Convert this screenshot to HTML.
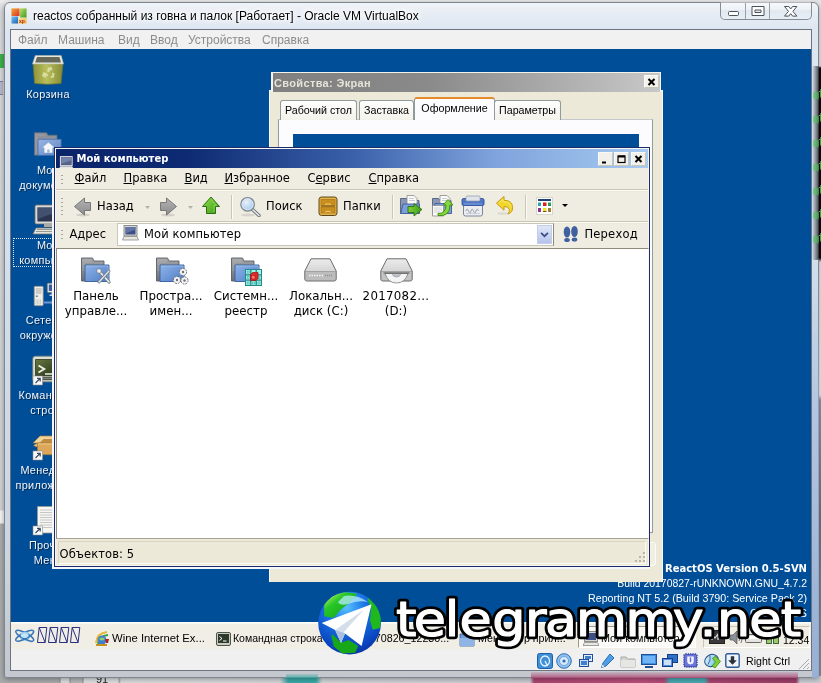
<!DOCTYPE html>
<html lang="ru">
<head>
<meta charset="utf-8">
<title>reactos собранный из говна и палок [Работает] - Oracle VM VirtualBox</title>
<style>
*{box-sizing:border-box;margin:0;padding:0}
html,body{width:821px;height:683px;overflow:hidden}
body{position:relative;background:#d9dadd;font-family:"Liberation Sans",sans-serif;font-size:11px;color:#000}
.abs{position:absolute}
body>*{will-change:transform}
.nw{white-space:nowrap}
/* ---------- host background ---------- */
#hostbg{left:0;top:0;width:821px;height:683px;background:#e4e4e6}
/* ---------- VirtualBox window ---------- */
#vbox{left:4px;top:2px;width:815px;height:676px;border:1px solid #7d8590;border-radius:6px 6px 3px 3px;
 background:linear-gradient(180deg,#f1f4f8 0,#e6ecf4 12px,#dde6f1 28px,#d3deeb 300px,#ccd4de 560px,#c4c8ce 100%);box-shadow:0 1px 5px rgba(0,0,0,.35)}
#vtitle{left:33px;top:8px;font-size:12px;line-height:16px;color:#000;text-shadow:0 0 6px #fff,0 0 6px #fff,0 0 3px #fff}
#vclient{left:10px;top:29px;width:802px;height:642px;border:1px solid #6b7480;background:#f0f0f0}
#vmenu{left:11px;top:30px;width:800px;height:19px;background:#f1f1f1;color:#8c8c8c;font-size:12px;line-height:19px}
#vmenu span{position:absolute;top:.5px}
#vm{left:11px;top:49px;width:800px;height:600px;background:#004e98;overflow:hidden}
#vstatus{left:11px;top:649px;width:800px;height:21px;background:#f0f0f0}
/* ---------- ReactOS desktop ---------- */
.dlabel{position:absolute;width:90px;text-align:center;color:#eef4fc;font-size:10.900px;letter-spacing:.3px;line-height:15px;text-shadow:1px 1px 0 rgba(0,0,0,.5)}
.dicon{position:absolute;width:32px;height:32px}
/* ---------- ReactOS windows ---------- */
.rwin{position:absolute;background:#ece9d8;border:1px solid #d4d0c8;box-shadow:1px 1px 0 #404040}
.tab{position:absolute;top:28px;height:20px;background:linear-gradient(180deg,#fefefd,#f3f2ea);border:1px solid #919b9c;border-bottom:none;border-radius:3px 3px 0 0;font-size:10.700px;line-height:19px;text-align:center;white-space:nowrap;color:#000}
.tab.sel{top:25px;height:23px;background:#fcfcfe;border-top:2px solid #e68b2c;border-radius:3px 3px 0 0;line-height:19px}
.cbtn{position:absolute;top:4px;width:15px;height:14px;background:#f1f0ea;border:1px solid #faf9f4;border-right-color:#c9c6b6;border-bottom-color:#c9c6b6}
.cbtn svg{position:absolute;left:0;top:0}
.mtxt{font-size:11.500px;line-height:18px;color:#000}
.mtxt u{text-decoration:underline;text-underline-offset:1px}
.grip{position:absolute;width:2px;background:repeating-linear-gradient(180deg,#a8a69a 0,#a8a69a 1.500px,transparent 1.500px,transparent 4px)}
.clabel{position:absolute;top:141px;width:100px;text-align:center;font-size:11.800px;line-height:15.300px;white-space:nowrap}
.dv{font-family:"DejaVu Sans","Liberation Sans",sans-serif}
</style>
</head>
<body>
<div id="hostbg" class="abs">
 <!-- left strip behind window -->
 <div class="abs" style="left:0;top:0;width:6px;height:683px;background:linear-gradient(180deg,#e9e9ea 0,#d6d7d9 12px,#cfd0d2 510px,#f2f2f2 511px,#f2f2f2 523px,#a9aaac 524px)"></div>
 <div class="abs" style="left:0;top:54px;width:4px;height:14px;background:#3fae4a"></div>
 <div class="abs" style="left:0;top:81px;width:3px;height:14px;background:#b4b8cc;border-top:1px solid #7c8090;border-bottom:1px solid #7c8090"></div>
 <!-- top strip -->
 <div class="abs" style="left:0;top:0;width:821px;height:3px;background:#ecebec"></div>
 <!-- right strip: terminal window -->
 <div class="abs" style="left:815px;top:0;width:6px;height:683px;background:linear-gradient(180deg,#e6e6e8 0,#e6e6e8 66px,#0a0a0a 68px,#0a0a0a 258px,#e4e6ea 262px,#eceef0 395px,#8c98a8 400px,#6c7888 520px,#8490a0 683px)"></div>
 <div class="abs nw" style="left:818px;top:83px;width:3px;height:170px;overflow:hidden;font-family:'Liberation Mono',monospace;font-size:12px;line-height:24px;color:#35d23a">t<br>t<br>t<br>t<br>t<br>t<br>t</div>
 <!-- bottom strip -->
 <div class="abs" style="left:0;top:676px;width:821px;height:7px;background:linear-gradient(90deg,#a8a9ab 0,#a8a9ab 59px,#8a8b8d 60px,#d8d9db 61px,#d8d9db 69px,#8a8b8d 70px,#b4b5b7 71px,#b4b5b7 82px,#8a8b8d 83px,#dcdddf 84px,#dcdddf 118px,#a0a1a3 119px,#d8d9db 121px,#d2d3d6 280px,#39a9a6 288px,#39a9a6 316px,#d0d2d6 322px,#c9cbd0 530px,#a8456f 534px,#b8507c 640px,#b04a76 664px,#4aa8b0 670px,#4aa8b0 704px,#a8456f 710px,#9a3f68 796px,#c8ccd2 800px)"></div>
 <div class="abs nw" style="left:96px;top:673px;font-size:11px;line-height:12px;color:#222">91</div>
</div>

<div id="vbox" class="abs"></div>
<div id="vtitle" class="abs nw">reactos собранный из говна и палок [Работает] - Oracle VM VirtualBox</div>
<svg class="abs" style="left:11px;top:8px" width="16" height="16" viewBox="0 0 16 16"><defs><linearGradient id="q1" x1="0" y1="0" x2="1" y2="1"><stop offset="0" stop-color="#f7a23a"/><stop offset="1" stop-color="#d8361c"/></linearGradient><linearGradient id="q2" x1="0" y1="0" x2="1" y2="1"><stop offset="0" stop-color="#b8e06a"/><stop offset="1" stop-color="#3f9a22"/></linearGradient><linearGradient id="q3" x1="0" y1="0" x2="1" y2="1"><stop offset="0" stop-color="#6fc3f5"/><stop offset="1" stop-color="#1c62b8"/></linearGradient><linearGradient id="q4" x1="0" y1="0" x2="1" y2="1"><stop offset="0" stop-color="#fbe9a0"/><stop offset="1" stop-color="#f0b040"/></linearGradient></defs><rect width="16" height="16" fill="#e9e4d6"/><rect x=".5" y=".5" width="8" height="7.500" fill="url(#q1)"/><rect x="9" y=".5" width="6.500" height="9" fill="url(#q2)"/><rect x=".5" y="8.500" width="6.500" height="7" fill="url(#q3)"/><rect x="7.500" y="10" width="8" height="5.500" fill="url(#q4)"/><text x="8" y="14.500" font-family="'Liberation Sans',sans-serif" font-size="5" font-weight="bold" fill="#b03010">xp</text></svg>
<div class="abs" style="left:720px;top:2px;width:92px;height:18px;border:1px solid #848c96;border-top:none;border-radius:0 0 5px 5px;background:linear-gradient(180deg,rgba(255,255,255,.45),rgba(255,255,255,.1) 45%,rgba(200,212,226,.25) 50%,rgba(255,255,255,.2))"></div>
<div class="abs" style="left:745px;top:3px;width:1px;height:16px;background:#98a0aa"></div>
<div class="abs" style="left:769px;top:3px;width:1px;height:16px;background:#98a0aa"></div>
<svg class="abs" style="left:720px;top:2px" width="92" height="18" viewBox="0 0 92 18"><g fill="#fff" stroke="#4a525c" stroke-width="1"><rect x="8.500" y="9.500" width="10" height="4" rx="1"/><path d="M32 4.500h12v9h-12zM35 8h6v2.500h-6z" fill-rule="evenodd"/><path d="M64.500 4.500h4.300l1.900 2.500 1.900-2.500h4.300l-4 4.800 4 4.800h-4.300l-1.900-2.500-1.900 2.500h-4.300l4-4.800z"/></g></svg>
<div class="abs" style="left:812px;top:66px;width:7px;height:194px;background:linear-gradient(90deg,rgba(20,22,26,0),rgba(20,22,26,.75));border-radius:2px"></div>
<div class="abs" style="left:813px;top:90px;width:6px;height:160px;background:repeating-linear-gradient(180deg,rgba(70,200,80,0) 0,rgba(70,200,80,0) 1px,rgba(70,200,80,.55) 3px,rgba(70,200,80,.55) 8px,rgba(70,200,80,0) 10px,rgba(70,200,80,0) 24px);filter:blur(.6px)"></div>
<div class="abs" style="left:531px;top:672px;width:267px;height:6px;background:linear-gradient(180deg,rgba(176,78,120,.15),rgba(176,78,120,.9));filter:blur(.5px)"></div>
<div class="abs" style="left:286px;top:674px;width:32px;height:4px;background:linear-gradient(180deg,rgba(57,169,166,.2),rgba(57,169,166,.8))"></div>
<div class="abs" style="left:812px;top:262px;width:7px;height:416px;background:linear-gradient(180deg,rgba(160,182,216,0) 0,rgba(160,182,216,.55) 140px,rgba(150,174,212,.9) 380px,rgba(150,174,212,.9) 100%);border-radius:0 0 3px 0"></div>
<div id="vclient" class="abs"></div>
<div id="vmenu" class="abs nw">
 <span style="left:7px">Файл</span><span style="left:47px">Машина</span><span style="left:107px">Вид</span><span style="left:139px">Ввод</span><span style="left:177px">Устройства</span><span style="left:251px">Справка</span>
</div>

<div id="vm" class="abs">
<!--DESKTOP-->
<!-- desktop icons (VM coords = page - (11,49)) -->
<svg class="dicon" style="left:21px;top:6px" viewBox="0 0 32 32"><defs><linearGradient id="tg" x1="0" x2="1"><stop offset="0" stop-color="#8d9338"/><stop offset=".45" stop-color="#b9bf5c"/><stop offset="1" stop-color="#858b34"/></linearGradient></defs><path d="M1 8.500 L31 8.500 L29 28.500 Q16 30 2.500 28.500 Z" fill="url(#tg)" stroke="#6c7130" stroke-width=".8"/><path d="M3.200 .6 L29.200 .6 L31.500 9 L.5 9 Z" fill="#e9ebdf" stroke="#b4b6a4" stroke-width=".6"/><path d="M5 2 L27.500 2 L29 7.600 L3.200 7.600Z" fill="#66685a"/><g fill="#e3e6b5" opacity=".8"><path d="M16 12.500l3.500-.5 1 3.500-2-.5-1.500 2.500-2-1.200z"/><path d="M11.500 17l-1.500 4 3.500 2 .5-2 2 .2-.5-2.500z"/><path d="M20 17.500l2.500 1-.5 4-3.500.5.500-2 1.200-.6z"/></g></svg>
<div class="dlabel" style="left:-8px;top:38px">Корзина</div>

<svg class="dicon" style="left:21px;top:81px" viewBox="0 0 32 32"><defs><linearGradient id="df" x1="0" y1="0" x2="1" y2="1"><stop offset="0" stop-color="#9ab6e2"/><stop offset="1" stop-color="#5f86c4"/></linearGradient></defs><path d="M2.500 2.700h12l1.500 2.500h9v6H6v14H2.500z" fill="#8c9098" stroke="#6c7078" stroke-width=".7"/><path d="M3.200 5h10M3.200 7h3M3.200 9h3M3.200 11h3M3.200 13h3M3.200 15h3M3.200 17h3M3.200 19h3M3.200 21h3M3.200 23h3" stroke="#b4b6ba" stroke-width=".6" opacity=".7"/><path d="M6 9.300h23.100v16H6z" fill="url(#df)" stroke="#4a70ae" stroke-width=".8"/><path d="M16.400 12.400l6 5.200h-2v5.100h-8v-5.100h-2z" fill="#f4f8fc"/><rect x="15.200" y="19.500" width="2.400" height="3.200" fill="#9ab4da"/></svg>
<div class="dlabel" style="left:-8px;top:114px">Мои<br>документы</div>

<svg class="dicon" style="left:21px;top:155px" viewBox="0 0 32 32"><rect x="3" y="1" width="26" height="19" rx="1.500" fill="#d9d9d6" stroke="#6d6d6a" stroke-width=".8"/><rect x="5.500" y="3.500" width="21" height="14" fill="#2b3550"/><path d="M5.500 3.500h21v6q-10 0-21 6z" fill="#4a5878" opacity=".8"/><rect x="12" y="20" width="8" height="3" fill="#a9a9a6"/><path d="M4 24h24l3 6H1z" fill="#e4e4e0" stroke="#77776f" stroke-width=".8"/><path d="M5 25.500h22M4 27.500h24" stroke="#8f8f88" stroke-width=".9"/></svg>
<div class="abs" style="left:2px;top:189px;width:70px;height:29px;border:1px dotted #d8e4f4"></div>
<div class="dlabel" style="left:-8px;top:189px">Мой<br>компьютер</div>

<svg class="dicon" style="left:21px;top:230px" viewBox="0 0 32 32"><rect x="2.200" y="7.300" width="9" height="19.400" rx="1" fill="#eeeeea" stroke="#8a8a84" stroke-width=".7"/><path d="M3.800 10h5.800M3.800 12h5.800M3.800 14h5.800" stroke="#a4a49e" stroke-width=".9"/><rect x="3.800" y="16.500" width="2" height="1.500" fill="#7c8c7c"/><path d="M4 20.500v5M5.500 20.500v5M7 20.500v5M8.500 20.500v5" stroke="#c4c4be" stroke-width=".7"/><rect x="15.300" y="4.200" width="13" height="9.300" rx="1" fill="#e4e4e0" stroke="#77776f" stroke-width=".7"/><rect x="16.800" y="5.600" width="10" height="6.300" fill="#3a5aa0"/><rect x="19.500" y="13.500" width="4.500" height="2" fill="#c4c4c0"/><rect x="17.500" y="15.500" width="8.500" height="1.400" fill="#e4e4e0"/><path d="M21.700 17v5.500" stroke="#8a8a84" stroke-width="1.600"/><path d="M12 23.500h20" stroke="#6f98d8" stroke-width="2"/><rect x="19.700" y="21.800" width="4" height="3.400" fill="#dfe3ea" stroke="#77776f" stroke-width=".6"/></svg>
<div class="dlabel" style="left:-8px;top:264px">Сетевое<br>окружение</div>

<svg class="dicon" style="left:21px;top:305px" viewBox="0 0 32 32"><defs><linearGradient id="cs" x1="0" y1="0" x2="1" y2="1"><stop offset="0" stop-color="#66783f"/><stop offset=".5" stop-color="#43522c"/><stop offset="1" stop-color="#2c361e"/></linearGradient></defs><rect x=".8" y="2.200" width="30.400" height="25.600" rx="2.500" fill="#dcdfd4" stroke="#80847a" stroke-width=".8"/><rect x="3.600" y="5.600" width="25" height="16" fill="url(#cs)" stroke="#2a331c" stroke-width=".8"/><path d="M6.500 11.500l5.800 3.500-5.800 3.500" fill="none" stroke="#eef2e4" stroke-width="1.900"/><path d="M13 20h7" stroke="#eef2e4" stroke-width="1.500"/><rect x="3.600" y="22.600" width="25" height="3.600" fill="#4c5244"/><path d="M4 24.300h24" stroke="#8c9284" stroke-width="1"/><rect x="1" y="22" width="9.500" height="9" fill="#fbfbfb" stroke="#8a8a8a" stroke-width=".6"/><path d="M3.500 29l4.500-4.500M5 24.300h3.200v3.200" fill="none" stroke="#3b4a63" stroke-width="1.200"/></svg>
<div class="dlabel" style="left:-8px;top:339px">Командная<br>строка</div>

<svg class="dicon" style="left:21px;top:380px" viewBox="0 0 32 32"><path d="M1 14 L8 7 H32 V14Z" fill="#f0d49c" stroke="#a87a34" stroke-width=".7"/><path d="M7.500 14 L11.500 10 H32 V14Z" fill="#c08c42"/><path d="M5.500 14H32V25.700H5.500z" fill="#dca758" stroke="#a87a34" stroke-width=".7"/><path d="M5.500 14l-4 2.500 3 1.500 1-1z" fill="#e8bd7a" stroke="#a87a34" stroke-width=".5"/><path d="M6 15h26" stroke="#eecb8c" stroke-width="1"/><rect x="1" y="22" width="9.500" height="9" fill="#fbfbfb" stroke="#8a8a8a" stroke-width=".6"/><path d="M3.500 29l4.500-4.500M5 24.300h3.200v3.200" fill="none" stroke="#3b4a63" stroke-width="1.200"/></svg>
<div class="dlabel" style="left:-8px;top:414px">Менеджер<br>приложений</div>

<svg class="dicon" style="left:21px;top:455px" viewBox="0 0 32 32"><path d="M5.500 2.500h22v26.500h-22z" fill="#f6f6f4" stroke="#9a9a96" stroke-width=".8"/><path d="M8 6h12M8 8.500h17M8 11h17M8 13.500h17M8 16h17M8 18.500h17M8 21h17M8 23.500h12" stroke="#c0c0bc" stroke-width=".9"/><rect x="1" y="22" width="9.500" height="9" fill="#fbfbfb" stroke="#8a8a8a" stroke-width=".6"/><path d="M3.500 29l4.500-4.500M5 24.300h3.200v3.200" fill="none" stroke="#3b4a63" stroke-width="1.200"/></svg>
<div class="dlabel" style="left:-8px;top:489px">Прочти<br>Меня</div>

<!-- version text -->
<div class="abs nw dv" style="right:4px;top:512px;color:#fff;font-weight:bold;font-size:10px;line-height:15px;text-align:right">ReactOS Version 0.5-SVN</div>
<div class="abs nw" style="right:4px;top:527px;color:#fff;font-size:10.450px;line-height:15px;text-align:right">Build 20170827-rUNKNOWN.GNU_4.7.2</div>
<div class="abs nw" style="right:4px;top:542px;color:#fff;font-size:10.700px;line-height:15px;text-align:right">Reporting NT 5.2 (Build 3790: Service Pack 2)</div>
<div class="abs nw" style="right:4px;top:557px;color:#fff;font-size:10.700px;line-height:15px;text-align:right">C:\ReactOS</div>

<!--DIALOG-->
<!-- Display properties dialog (behind explorer). VM coords -->
<div class="abs" style="left:258px;top:41px;width:394.300px;height:492px;background:#ece9d8;border:1px solid #f4f6fa;border-right:1.500px solid #f8f8f6;border-bottom-color:#f8f7f0"></div>
<div class="rwin" id="dlg" style="left:260px;top:22.500px;width:390px;height:510px;border:none;box-shadow:none;background:linear-gradient(180deg,#f4f2ea 0,#f4f2ea 20px,#ece9d8 20px)">
 <div class="abs" style="left:2px;top:1.500px;right:1px;height:18.500px;background:linear-gradient(90deg,#808080,#8a8a8a 40%,#c8c8c8)"></div>
 <div class="abs nw" style="left:3px;top:4px;font-weight:bold;font-size:11px;letter-spacing:.35px;line-height:14px;color:#e6e3d8">Свойства: Экран</div>
 <div class="abs" style="left:373px;top:3px;width:14.500px;height:13.500px;background:#f3f2ec;border:1px solid #faf9f4;border-right-color:#c9c6b6;border-bottom-color:#c9c6b6"><svg viewBox="0 0 13 12" width="13" height="12" style="position:absolute;left:0;top:0"><path d="M3.500 3l6 6M9.500 3l-6 6" stroke="#000" stroke-width="2"/></svg></div>
 <!-- tab page -->
 <div class="abs" style="left:7px;top:47px;width:375px;height:414px;background:#fcfcfe;border:1px solid #919b9c;border-top-color:#c5c9cc"></div>
 <div class="abs" style="left:22px;top:62px;width:346px;height:200px;background:#004e98"></div>
 <!-- tabs -->
 <div class="tab" style="left:9px;width:77px">Рабочий стол</div>
 <div class="tab" style="left:88px;width:55px">Заставка</div>
 <div class="tab" style="left:223px;width:67px">Параметры</div>
 <div class="tab sel" style="left:143px;width:81px">Оформление</div>
 <!-- bottom buttons partially visible -->
 <div class="abs" style="left:300px;top:470px;width:85px;height:24px;border:1px solid #fbfaf4;border-radius:3px;background:#f1efe4"></div>
</div>

<!--EXPLORER-->
<div class="abs" style="left:41px;top:119px;width:2.500px;height:400.500px;background:#f4f6fa"></div>
<div class="abs" style="left:41.500px;top:518px;width:597px;height:1.500px;background:#f4f6fa"></div>
<!-- Explorer window "Мой компьютер". VM coords; children relative to window (page - (54,147)) -->
<div class="rwin dv" id="exp" style="left:43px;top:98px;width:596px;height:420px;border:1px solid #1b2b6b;box-shadow:inset 0 0 0 1px #f6f6f2">
 <div class="abs" style="left:1px;top:1px;right:1px;height:19px;background:linear-gradient(90deg,#0a246a 0,#0d2a72 22%,#3a60aa 50%,#7fa3dc 74%,#a6caf0 100%)"></div>
 <svg class="abs" style="left:4px;top:7.500px" width="14.500" height="13" viewBox="0 0 16 14"><rect x="1.500" y=".5" width="13" height="10" fill="#d6d6d2" stroke="#e8e8e4"/><rect x="2.500" y="1.500" width="11" height="8" fill="#56648f" stroke="#3a4568" stroke-width=".6"/><path d="M2.500 1.500h11v3l-11 4z" fill="#7482ae"/><path d="M0 13.500l1.500-2.500h13l1.500 2.500z" fill="#e4e4e0"/></svg>
 <div class="abs nw" style="left:21.500px;top:5px;font-weight:bold;font-size:10px;line-height:12px;color:#fff">Мой компьютер</div>
 <div class="cbtn" style="left:543px"><svg viewBox="0 0 13 12" width="13" height="12"><path d="M3 9.500h4" stroke="#000" stroke-width="2"/></svg></div>
 <div class="cbtn" style="left:559px"><svg viewBox="0 0 13 12" width="13" height="12"><rect x="3" y="3" width="7" height="6.500" fill="none" stroke="#000" stroke-width="1.200"/><path d="M3 3.500h7" stroke="#000" stroke-width="2"/></svg></div>
 <div class="cbtn" style="left:576px"><svg viewBox="0 0 13 12" width="13" height="12"><path d="M3.500 3l6 6M9.500 3l-6 6" stroke="#000" stroke-width="2"/></svg></div>

 <!-- menu bar -->
 <div class="abs" style="left:1px;top:20px;right:1px;height:22px;background:#efede2"></div>
 <div class="grip" style="left:6px;top:26.500px;height:10px"></div>
 <div class="abs nw mtxt" style="left:19.5px;top:21px"><u>Ф</u>айл</div>
 <div class="abs nw mtxt" style="left:68.5px;top:21px"><u>П</u>равка</div>
 <div class="abs nw mtxt" style="left:129.5px;top:21px"><u>В</u>ид</div>
 <div class="abs nw mtxt" style="left:169.5px;top:21px"><u>И</u>збранное</div>
 <div class="abs nw mtxt" style="left:252.5px;top:21px">С<u>е</u>рвис</div>
 <div class="abs nw mtxt" style="left:313.5px;top:21px"><u>С</u>правка</div>
 <div class="abs" style="left:1px;top:41px;right:1px;height:2px;border-top:1px solid #c9c6b8;border-bottom:1px solid #fbfaf5"></div>

 <!-- toolbar -->
 <div class="abs" style="left:1px;top:44px;right:1px;height:30px;background:#efede2"></div>
 <div class="grip" style="left:6px;top:49.500px;height:18px"></div>
 <!--TBICONS-->
 <!-- toolbar icons; window-relative = page - (54,147) -->
 <svg class="abs" style="left:17.500px;top:49px" width="19" height="20" viewBox="0 0 19 20"><defs><linearGradient id="gb" x1="0" y1="0" x2="0" y2="1"><stop offset="0" stop-color="#b4b4b4"/><stop offset="1" stop-color="#8c8c8c"/></linearGradient></defs><ellipse cx="10" cy="18" rx="7" ry="1.500" fill="#000" opacity=".12"/><path d="M1.500 9.500L11.500 1v4.500h6v8h-6V18z" fill="url(#gb)" stroke="#777" stroke-width="1" stroke-linejoin="round"/></svg>
 <svg class="abs" style="left:90px;top:58px" width="5" height="3" viewBox="0 0 5 3"><path d="M0 0h5l-2.500 3z" fill="#b4b2a8"/></svg>
 <svg class="abs" style="left:104px;top:49px" width="19" height="20" viewBox="0 0 19 20"><ellipse cx="9" cy="18" rx="7" ry="1.500" fill="#000" opacity=".12"/><path d="M17.500 9.500L7.500 1v4.500h-6v8h6V18z" fill="url(#gb)" stroke="#777" stroke-width="1" stroke-linejoin="round"/></svg>
 <svg class="abs" style="left:133px;top:58px" width="5" height="3" viewBox="0 0 5 3"><path d="M0 0h5l-2.500 3z" fill="#b4b2a8"/></svg>
 <svg class="abs" style="left:146px;top:48px" width="20" height="19" viewBox="0 0 20 19"><defs><linearGradient id="gu" x1="0" y1="0" x2="1" y2="1"><stop offset="0" stop-color="#8fe04a"/><stop offset="1" stop-color="#3f9a18"/></linearGradient></defs><path d="M10 1L18.500 10.500h-4V17.500h-9V10.500h-4z" fill="url(#gu)" stroke="#2c6f10" stroke-width="1" stroke-linejoin="round"/><path d="M10 3.500l5.500 6h-2.500v6.500" fill="none" stroke="#b8f07a" stroke-width=".8" opacity=".6"/></svg>
 <svg class="abs" style="left:184px;top:48px" width="22" height="21" viewBox="0 0 22 21"><defs><radialGradient id="gm" cx=".4" cy=".35" r=".7"><stop offset="0" stop-color="#e8f2fc"/><stop offset="1" stop-color="#9fc4ea"/></radialGradient></defs><ellipse cx="9" cy="19" rx="7" ry="1.500" fill="#000" opacity=".1"/><path d="M13 13l7 6.500" stroke="#6f757c" stroke-width="3.400" stroke-linecap="round"/><path d="M13 13l7 6.500" stroke="#e6e8ea" stroke-width="1.600" stroke-linecap="round"/><circle cx="8.600" cy="8.300" r="6.800" fill="url(#gm)" stroke="#7c848c" stroke-width="1.200"/><circle cx="8.600" cy="8.300" r="5.400" fill="none" stroke="#dfe6ee" stroke-width="1"/></svg>
 <svg class="abs" style="left:263px;top:48px" width="20" height="20" viewBox="0 0 20 20"><rect x="1" y="1" width="18" height="18.500" rx="2.500" fill="#e0b04c" stroke="#5e4a18" stroke-width="1"/><rect x="3" y="3.500" width="14" height="6" fill="#c98f1e" stroke="#a87414" stroke-width=".6"/><rect x="3" y="11" width="14" height="6" fill="#c98f1e" stroke="#a87414" stroke-width=".6"/><path d="M7 8.500q3-1.500 6 0M7 16q3-1.500 6 0" fill="none" stroke="#f0cc78" stroke-width="1"/><path d="M3 10.200h14" stroke="#6e5418" stroke-width=".8"/></svg>
 <!-- move to -->
 <svg class="abs" style="left:343.500px;top:47px" width="24" height="22" viewBox="0 0 24 22"><defs><linearGradient id="ga" x1="0" y1="0" x2="1" y2="0"><stop offset="0" stop-color="#7ed03a"/><stop offset="1" stop-color="#3f9a18"/></linearGradient></defs><path d="M1.500 3.500h6l1.500 2h11v13h-18.500z" fill="#8a97b4" stroke="#4f5f82" stroke-width=".9"/><path d="M8 .5h7l3 3v9H8z" fill="#fafafa" stroke="#8a8a8a" stroke-width=".8"/><path d="M10 3.500h5M10 5.500h6" stroke="#c0c0c0" stroke-width=".8"/><path d="M4 9h16.500v9.500H1.800z" fill="#7b9fd8" stroke="#3f5f98" stroke-width=".9"/><path d="M9 11.500h6V8.500l8 6-8 6.500v-3.500H9z" fill="url(#ga)" stroke="#2c6f10" stroke-width=".9" stroke-linejoin="round"/></svg>
 <!-- copy to -->
 <svg class="abs" style="left:376px;top:47px" width="24" height="22" viewBox="0 0 24 22"><path d="M1.500 3.500h6l1.500 2h11v13h-18.500z" fill="#8a97b4" stroke="#4f5f82" stroke-width=".9"/><path d="M9 .5h7l3 3v9H9z" fill="#fafafa" stroke="#8a8a8a" stroke-width=".8"/><path d="M11 3.500h5M11 5.500h6" stroke="#c0c0c0" stroke-width=".8"/><path d="M4 8.500h16.500v10H1.800z" fill="#7b9fd8" stroke="#3f5f98" stroke-width=".9"/><path d="M1.500 10.500h11v10.500h-11z" fill="#fafafa" stroke="#8a8a8a" stroke-width=".8"/><path d="M3 13h8M3 15h8M3 17h6" stroke="#c8c8c8" stroke-width=".8"/><path d="M7 18.500q8 0 8-8.500h-3l5-5.500 5 5.500h-3q0 12-12 10.500z" fill="#86d83a" stroke="#3c8a14" stroke-width=".9" stroke-linejoin="round"/></svg>
 <!-- shredder -->
 <svg class="abs" style="left:406px;top:47px" width="24" height="22" viewBox="0 0 24 22"><rect x="2.500" y="9" width="19" height="12" rx="2" fill="#ecedf0" stroke="#6f7c92" stroke-width=".9"/><path d="M5 16q1-4 2.500 0t2.500 0 2.500 0 2.500 0 2.500 0" fill="none" stroke="#9aa2ae" stroke-width="1"/><path d="M5 18.500h14" stroke="#c4c8ce" stroke-width=".8"/><rect x="1" y="3.500" width="22" height="7" rx="1.500" fill="#4f78c8" stroke="#2f4f98" stroke-width=".9"/><rect x="5" y="1" width="14" height="5" rx="1" fill="#dfe3ea" stroke="#8f98a8" stroke-width=".7"/><path d="M3 9h18" stroke="#7fa0e0" stroke-width="1"/></svg>
 <!-- undo -->
 <svg class="abs" style="left:440px;top:47px" width="19" height="21" viewBox="0 0 20 22"><ellipse cx="8" cy="19.500" rx="6" ry="1.500" fill="#000" opacity=".08"/><path d="M1.500 8.500L9.500 1.500v4q9 0 9 8 0 5-5 6.500 2-2 1.500-5-.8-3-5.500-3v4z" fill="#f2d628" stroke="#c29a10" stroke-width="1" stroke-linejoin="round"/><path d="M4 8.500l4.500-4v2.500q8-.5 8.500 6" fill="none" stroke="#fbf0a0" stroke-width=".8" opacity=".8"/></svg>
 <!-- views -->
 <svg class="abs" style="left:480.500px;top:49px" width="17" height="18" viewBox="0 0 17 18"><rect x=".5" y=".5" width="16" height="17" fill="#fff" stroke="#d8d6cc"/><rect x="2" y="2" width="13" height="2" fill="#1f3f78"/><rect x="2" y="5.500" width="3" height="3.500" fill="#2f9fb0"/><rect x="7" y="5.500" width="3.500" height="3.500" fill="#d82020"/><rect x="12" y="5.500" width="3" height="3.500" fill="#20a050"/><rect x="2" y="11" width="3" height="4" fill="#903090"/><rect x="7" y="11" width="3.500" height="3" fill="#f0e020"/><rect x="7" y="14" width="3.500" height="1" fill="#805010"/><rect x="12" y="11" width="3" height="4" fill="#a07840"/></svg>
 <svg class="abs" style="left:506.500px;top:55.500px" width="6" height="3" viewBox="0 0 6 3"><path d="M0 0h6l-3 3z" fill="#000"/></svg>
 <div class="abs nw mtxt" style="left:42px;top:49px">Назад</div>
 <div class="abs nw mtxt" style="left:211px;top:49px">Поиск</div>
 <div class="abs nw mtxt" style="left:288px;top:49px">Папки</div>
 <div class="abs" style="left:176px;top:47px;width:2px;height:24px;border-left:1px solid #c9c6b8;border-right:1px solid #fbfaf5"></div>
 <div class="abs" style="left:336.500px;top:47px;width:2px;height:24px;border-left:1px solid #c9c6b8;border-right:1px solid #fbfaf5"></div>
 <div class="abs" style="left:470px;top:47px;width:2px;height:24px;border-left:1px solid #c9c6b8;border-right:1px solid #fbfaf5"></div>
 <div class="abs" style="left:1px;top:73px;right:1px;height:2px;border-top:1px solid #c9c6b8;border-bottom:1px solid #fbfaf5"></div>

 <!-- address bar -->
 <div class="abs" style="left:1px;top:76px;right:1px;height:25px;background:#efede2"></div>
 <div class="grip" style="left:6px;top:81.500px;height:10px"></div>
 <div class="abs nw mtxt" style="left:14.500px;top:77px">Адрес</div>
 <div class="abs" style="left:62px;top:75px;width:437px;height:23px;background:#fff;border:1px solid #c9c6b8;border-right-color:#8d8a7c"></div>
 <svg class="abs" style="left:67px;top:77px" width="17" height="16" viewBox="0 0 17 16"><rect x="2" y=".5" width="13" height="10.500" fill="#d6d6d2" stroke="#8d8d88"/><rect x="3.500" y="2" width="10" height="7.500" fill="#3c4f86"/><path d="M3.500 2h10v2.500l-10 4z" fill="#6275a8"/><path d="M.5 15l1.500-3.500h13l1.500 3.500z" fill="#e6e6e2" stroke="#8d8d88" stroke-width=".8"/></svg>
 <div class="abs nw mtxt" style="left:89px;top:77px;letter-spacing:.1px">Мой компьютер</div>
 <div class="abs" style="left:481.500px;top:76.500px;width:15px;height:19px;background:linear-gradient(180deg,#dfe6f7,#b5c4ea);border:1px solid #c2cdea"><svg viewBox="0 0 15 19" width="13" height="17"><path d="M3.500 7.500l4 4 4-4" fill="none" stroke="#3a4f8c" stroke-width="2"/></svg></div>
 <svg class="abs" style="left:507px;top:77px" width="18" height="18" viewBox="0 0 18 18"><ellipse cx="5" cy="7" rx="3.300" ry="5.500" fill="#3f5f9f"/><ellipse cx="5" cy="15" rx="2.800" ry="2" fill="#3f5f9f"/><ellipse cx="12.500" cy="6.500" rx="3.300" ry="5.500" fill="#3f5f9f"/><ellipse cx="12.500" cy="14.500" rx="2.800" ry="2" fill="#3f5f9f"/></svg>
 <div class="abs nw mtxt" style="left:529.500px;top:77px;letter-spacing:.2px">Переход</div>

 <!-- content -->
 <div class="abs" style="left:1px;top:100px;width:592.500px;height:291px;background:#fff;border:1px solid #8d8a7c;border-right-color:#fbfaf5;border-bottom-color:#a8a598"></div>
 <!--CICONS-->
 <!-- content icons; window-relative = page - (54,147) -->
 <svg width="0" height="0" style="position:absolute"><defs>
  <linearGradient id="fb" x1="0" y1="0" x2="0" y2="1"><stop offset="0" stop-color="#a4a6a8"/><stop offset="1" stop-color="#6c7076"/></linearGradient>
  <linearGradient id="ff" x1="0" y1="0" x2="1" y2="1"><stop offset="0" stop-color="#8fb4ea"/><stop offset="1" stop-color="#4f7cc4"/></linearGradient>
  <linearGradient id="hd" x1="0" y1="0" x2="0" y2="1"><stop offset="0" stop-color="#ececec"/><stop offset="1" stop-color="#c4c4c4"/></linearGradient>
  <g id="fold"><path d="M.5 1h11l1.500 3h10v20H.5z" fill="url(#fb)" stroke="#5a5e64" stroke-width=".9"/><path d="M1.500 3h9M1.500 5h9M1.500 7h3M1.500 9h3M1.500 11h3M1.500 13h3" stroke="#c4c6c8" stroke-width=".6" opacity=".7"/><path d="M4 8h24v16.500H4z" fill="url(#ff)" stroke="#34609c" stroke-width=".9"/><path d="M5 9h22v15" fill="none" stroke="#b4d0f4" stroke-width=".7" opacity=".8"/></g>
 </defs></svg>
 <svg class="abs" style="left:26px;top:109px" width="32" height="28" viewBox="0 0 32 28"><use href="#fold"/><path d="M18 14l10 11" stroke="#6c7884" stroke-width="3.200" stroke-linecap="round"/><path d="M18 14l10 11" stroke="#f0f2f4" stroke-width="1.600" stroke-linecap="round"/><path d="M28 14l-10 11" stroke="#6c7884" stroke-width="3" stroke-linecap="round"/><path d="M28 14l-10 11" stroke="#dfe3e8" stroke-width="1.500" stroke-linecap="round"/><circle cx="18" cy="14" r="2.300" fill="#f0f2f4" stroke="#6c7884" stroke-width=".7"/></svg>
 <svg class="abs" style="left:101px;top:109px" width="33" height="29" viewBox="0 0 33 29"><use href="#fold"/><g fill="#f4f4f4" stroke="#5c6068" stroke-width=".9"><circle cx="27" cy="15" r="3.600" stroke-dasharray="1.800 1"/><circle cx="21" cy="23" r="3.600" stroke-dasharray="1.800 1"/><circle cx="28.500" cy="23.500" r="3.600" stroke-dasharray="1.800 1"/></g><g fill="#6c7078"><circle cx="27" cy="15" r="1.200"/><circle cx="21" cy="23" r="1.200"/><circle cx="28.500" cy="23.500" r="1.200"/></g></svg>
 <svg class="abs" style="left:176px;top:109px" width="32" height="30" viewBox="0 0 32 30"><use href="#fold"/><rect x="14.500" y="12.500" width="16" height="16" fill="#a8f0e8" stroke="#1f8a88" stroke-width="1"/><path d="M19.800 12.500v16M25.200 12.500v16M14.500 17.800h16M14.500 23.200h16" stroke="#1f8a88" stroke-width="1.300"/><g fill="none" stroke="#4fc0b8" stroke-width=".8"><rect x="16.200" y="14.200" width="2" height="2"/><rect x="16.200" y="19.500" width="2" height="2"/><rect x="16.200" y="25" width="2" height="2"/><rect x="21.500" y="25" width="2" height="2"/><rect x="27" y="25" width="2" height="2"/><rect x="27" y="19.500" width="2" height="2"/></g><path d="M19.500 17.500l2-2h5.500v6l-2 2h-5.500z" fill="#e02828" stroke="#9a1010" stroke-width=".7"/><rect x="20.500" y="18.500" width="3.500" height="3.500" fill="#ff7070" stroke="#b01818" stroke-width=".6"/></svg>
 <svg class="abs" style="left:249px;top:110px" width="33" height="24" viewBox="0 0 33 24"><path d="M7 .8h19l6.200 12.200v8q0 2-2 2H2.800q-2 0-2-2v-8z" fill="url(#hd)" stroke="#6c6c6c" stroke-width="1"/><path d="M1.200 13.500h30.600v7.500q0 1.500-1.500 1.500H2.700q-1.500 0-1.500-1.500z" fill="#bcbcbc" stroke="#8a8a8a" stroke-width=".6"/><path d="M5 17.500h14" stroke="#f4f4f4" stroke-width="1.600" stroke-dasharray="1.500 1"/><path d="M21 17.500h8" stroke="#8c8c8c" stroke-width="1.600" stroke-dasharray="1 1"/></svg>
 <svg class="abs" style="left:325px;top:110px" width="33" height="26" viewBox="0 0 33 26"><path d="M7 .8h19l6.200 12.200v8q0 2-2 2H2.800q-2 0-2-2v-8z" fill="url(#hd)" stroke="#6c6c6c" stroke-width="1"/><path d="M1.200 13.500h30.600v7.500q0 1.500-1.500 1.500H2.700q-1.500 0-1.500-1.500z" fill="#c4c4c4" stroke="#8a8a8a" stroke-width=".6"/><path d="M5 15.500h23q-3 9.500-11.500 9.500T5 15.500z" fill="#f4f4f6" stroke="#7c7c7c" stroke-width=".8"/><path d="M12 15.500q1 3.500 4.500 3.500t4.500-3.500z" fill="#c0c4cc" stroke="#8c8c8c" stroke-width=".6"/><path d="M3.500 15h26" stroke="#555" stroke-width="1"/></svg>
 <div class="clabel" style="left:-9px">Панель<br>управле...</div>
 <div class="clabel" style="left:66px">Простра...<br>имен...</div>
 <div class="clabel" style="left:141px">Системн...<br>реестр</div>
 <div class="clabel" style="left:216px">Локальн...<br>диск (C:)</div>
 <div class="clabel" style="left:291px"><span style="letter-spacing:.3px">2017082...</span><br>(D:)</div>

 <!-- status bar -->
 <div class="abs nw mtxt" style="left:4.500px;top:396.500px;letter-spacing:.1px">Объектов: 5</div>
 <div class="abs" style="left:3px;top:393px;right:3px;height:23px;border:1px solid #d8d5c6;border-right-color:#fbfaf5;border-bottom-color:#fbfaf5"></div>
 <svg class="abs" style="left:579px;top:403px" width="12" height="12" viewBox="0 0 12 12"><g fill="#b8b5a6"><rect x="9" y="1" width="2" height="2"/><rect x="5" y="5" width="2" height="2"/><rect x="9" y="5" width="2" height="2"/><rect x="1" y="9" width="2" height="2"/><rect x="5" y="9" width="2" height="2"/><rect x="9" y="9" width="2" height="2"/></g></svg>
</div>

<!--TASKBAR-->
<!-- ReactOS taskbar. VM coords (page - (11,49)); taskbar top = 573 -->
<div class="abs" id="tbar" style="left:0;top:573px;width:800px;height:27px;background:#f0eee5;border-top:1px solid #fdfdfb;box-shadow:inset 0 1px 0 #f8f7f2;font-size:10.700px;line-height:14px">
 <svg class="abs" style="left:3px;top:5px" width="22" height="16" viewBox="0 0 22 16"><defs><radialGradient id="rl" cx=".4" cy=".35" r=".7"><stop offset="0" stop-color="#d8f0fc"/><stop offset="1" stop-color="#58b0e0"/></radialGradient></defs><ellipse cx="10.700" cy="7.800" rx="5.500" ry="4.800" fill="url(#rl)"/><ellipse cx="10.700" cy="7.800" rx="10" ry="3" fill="none" stroke="#3a78b8" stroke-width="1.500" transform="rotate(28 10.700 7.800)"/><ellipse cx="10.700" cy="7.800" rx="10" ry="3" fill="none" stroke="#3a78b8" stroke-width="1.500" transform="rotate(-28 10.700 7.800)"/><ellipse cx="10.700" cy="7" rx="4" ry="3" fill="#c8e8fa" opacity=".8"/></svg>
 <svg class="abs" style="left:25.500px;top:3.500px" width="45" height="16" viewBox="0 0 45 16"><g fill="none" stroke="#2a3080" stroke-width="1"><path d="M2.200 .5h7.600l-1.700 15h-7.600zM2.200 .5l5.900 15"/><path d="M13.200 .5h7.600l-1.700 15h-7.600zM13.200 .5l5.900 15"/><path d="M24.200 .5h7.600l-1.700 15h-7.600zM24.200 .5l5.900 15"/><path d="M35.200 .5h7.600l-1.700 15h-7.600zM35.200 .5l5.900 15"/></g></svg>
 <!-- task buttons -->
 <svg class="abs" style="left:83px;top:7px" width="17" height="17" viewBox="0 0 17 17"><path d="M2 13 Q3 3 13 2" fill="none" stroke="#e8b830" stroke-width="2"/><path d="M4 14 Q5 6 14 5" fill="none" stroke="#3aa03a" stroke-width="2"/><circle cx="8" cy="10" r="4.500" fill="#3f7fd0"/><path d="M5 9q3-3 6 0-3 3-6 0z" fill="#8fd070"/><path d="M11 9h4l-1 4h-2z" fill="#b02020"/><rect x="2" y="14" width="11" height="2" fill="#c89020"/></svg>
 <div class="abs nw" style="left:101px;top:7.500px;font-size:11.300px">Wine Internet Ex...</div>
 <svg class="abs" style="left:205px;top:9px" width="15" height="14" viewBox="0 0 15 14"><rect x=".5" y=".5" width="14" height="13" rx="1.500" fill="#c9ccc0" stroke="#4f5348"/><rect x="2" y="2" width="11" height="9" fill="#2e3b2c"/><path d="M3.500 4.500l2.500 2-2.500 2M7 9h3.500" fill="none" stroke="#fff" stroke-width="1"/></svg>
 <div class="abs nw" style="left:222px;top:7.500px;font-size:10.500px">Командная строка</div>
 <svg class="abs" style="left:327px;top:8px" width="16" height="16" viewBox="0 0 16 16"><ellipse cx="8" cy="9" rx="7" ry="5" fill="#d8d8d4" stroke="#77776f"/><ellipse cx="8" cy="8" rx="7" ry="4" fill="#f0f0ec" stroke="#77776f" stroke-width=".6"/></svg>
 <div class="abs nw" style="left:346px;top:7.500px">20170826_12230...</div>
 <svg class="abs" style="left:448px;top:8px" width="16" height="16" viewBox="0 0 16 16"><path d="M1 3h6l1 2h7v10H1z" fill="#6f9ad6" stroke="#2f5a94" stroke-width=".8"/><path d="M1 7h14v8H1z" fill="#8fb5e6"/></svg>
 <div class="abs nw" style="left:467px;top:7.500px">Менеджер прил...</div>
 <div class="abs" style="left:567px;top:3px;width:118px;height:22px;background:#fbfaf6;border:1px solid #9d9a8b;border-right-color:#fff;border-bottom-color:#fff"></div>
 <svg class="abs" style="left:572px;top:8px" width="16" height="15" viewBox="0 0 16 15"><rect x="1.500" y=".5" width="13" height="10" fill="#d6d6d2" stroke="#8d8d88"/><rect x="3" y="2" width="10" height="7" fill="#3c4f86"/><path d="M0 14.500l1.500-3h13l1.500 3z" fill="#e6e6e2" stroke="#8d8d88" stroke-width=".8"/></svg>
 <div class="abs nw" style="left:590px;top:7.500px;font-size:10.800px">Мой компьютер</div>
 <!-- tray -->
 <div class="abs" style="left:692px;top:3px;width:107px;height:22px;border:1px solid #c9c6b6;border-right-color:#fff;border-bottom-color:#fff"></div>
 <svg class="abs" style="left:698px;top:7px" width="16" height="15" viewBox="0 0 16 15"><rect x=".5" y=".5" width="15" height="13" fill="#3a3a3a" stroke="#222"/><path d="M3 10V4l3 4 3-4v6" fill="none" stroke="#ddd" stroke-width="1.200"/></svg>
 <svg class="abs" style="left:718px;top:7px" width="14" height="15" viewBox="0 0 14 15"><path d="M1 5h3l4-4v13l-4-4H1z" fill="#8a8f98" stroke="#555" stroke-width=".7"/><path d="M10 4q2 3.500 0 7M12 2q3 5.500 0 11" fill="none" stroke="#777" stroke-width="1"/></svg>
 <svg class="abs" style="left:734px;top:9px" width="17" height="12" viewBox="0 0 17 12"><rect x=".5" y="2.500" width="16" height="8" rx="1" fill="#e4e4e0" stroke="#666"/><rect x="2" y="4" width="13" height="3" fill="#fff"/></svg>
 <svg class="abs" style="left:755px;top:11px" width="13" height="10" viewBox="0 0 13 10"><rect x=".5" y="3.500" width="5" height="6" fill="#9c6" stroke="#464"/><rect x="7.500" y=".5" width="5" height="9" fill="#9c6" stroke="#464"/></svg>
 <div class="abs nw" style="left:772px;top:9.500px;font-size:10.500px">12:34</div>
</div>

</div>

<!--STATUS-->
<div id="vstatus" class="abs">
 <!-- icons: page x 537.. ; local = page-11 ; y local = page-649 -->
 <svg class="abs" style="left:526px;top:4px" width="16" height="16" viewBox="0 0 16 16"><rect x=".5" y=".5" width="15" height="15" rx="2" fill="#3f8fd8" stroke="#1f5fa8"/><path d="M8 3a4.500 5 0 1 0 .1 0M8 8l2 4" fill="none" stroke="#e8f2fc" stroke-width="1.300"/></svg>
 <svg class="abs" style="left:545px;top:4px" width="16" height="16" viewBox="0 0 16 16"><circle cx="8" cy="8" r="7.300" fill="#8fc0ee" stroke="#2f6fb5"/><circle cx="8" cy="8" r="4.500" fill="#d8e9f8" stroke="#4f8fd0" stroke-width=".7"/><circle cx="8" cy="8" r="1.600" fill="#2f6fb5"/></svg>
 <svg class="abs" style="left:567px;top:4px" width="16" height="16" viewBox="0 0 16 16"><rect x="5.500" y="1.500" width="9" height="7" fill="#e8f0fa" stroke="#1f4f98"/><rect x="1.500" y="6.500" width="9" height="7" fill="#cfe0f4" stroke="#1f4f98"/><rect x="3" y="8" width="6" height="4" fill="#3f7fd0"/><rect x="7" y="3" width="6" height="3" fill="#3f7fd0"/></svg>
 <svg class="abs" style="left:588px;top:4px" width="16" height="16" viewBox="0 0 16 16"><path d="M11 1l4 4-8 8-4.500 1.500L4 10z" fill="#4f9fe8" stroke="#1f5fa8" stroke-width=".9"/><path d="M2.500 14.500l1-3 2 2z" fill="#eee"/></svg>
 <svg class="abs" style="left:609px;top:4px" width="16" height="16" viewBox="0 0 16 16"><path d="M1 4h5l1.500 2H15v8H1z" fill="#d4d4d0" stroke="#a8a8a4"/><path d="M1 7h14v7H1z" fill="#e6e6e2"/></svg>
 <svg class="abs" style="left:630px;top:4px" width="16" height="16" viewBox="0 0 16 16"><rect x=".5" y="1.500" width="15" height="10" fill="#3f8fe0" stroke="#1f4f98"/><rect x="2" y="3" width="12" height="7" fill="#6fb5f5"/><rect x="4" y="13" width="8" height="2" fill="#1f4f98"/></svg>
 <svg class="abs" style="left:651px;top:4px" width="16" height="16" viewBox="0 0 16 16"><rect x="5.500" y="1.500" width="10" height="8" fill="#2f6fc8" stroke="#123f88"/><rect x=".5" y="5.500" width="10" height="8" fill="#4f8fe0" stroke="#123f88"/><rect x="2" y="7" width="7" height="5" fill="#cfe0f4"/></svg>
 <svg class="abs" style="left:672px;top:4px" width="15" height="15" viewBox="0 0 15 15"><rect x="1" y="1" width="13" height="13" rx="1.500" fill="#5a66cc" stroke="#3a44a0" stroke-width="1.400" stroke-dasharray="1.300 1"/><rect x="2" y="2" width="11" height="11" rx="1" fill="#6a76d8"/><path d="M4.200 3.500h6.600v4.500q0 3-3.300 3.500-3.300-.5-3.300-3.500z" fill="#f4f4fc"/><path d="M7.500 5v3.500" stroke="#5a66cc" stroke-width="1.400" stroke-linecap="round"/></svg>
 <svg class="abs" style="left:693px;top:4px" width="17" height="16" viewBox="0 0 17 16"><defs><linearGradient id="ms" x1="0" y1="0" x2="1" y2="1"><stop offset="0" stop-color="#e4f4fc"/><stop offset="1" stop-color="#6ab8e8"/></linearGradient></defs><ellipse cx="7.500" cy="7.500" rx="7" ry="5.800" transform="rotate(-30 7.500 7.500)" fill="url(#ms)" stroke="#1f4f88" stroke-width="1"/><path d="M4 11.500Q7 7 6 2.500" fill="none" stroke="#1f4f88" stroke-width=".8"/><path d="M8.500 5.500l3-2.200 5 5-5.500 6.700-3-2 3.500-4z" fill="#7ed03a" stroke="#3c8a14" stroke-width=".8" stroke-linejoin="round"/></svg>
 <svg class="abs" style="left:714px;top:4px" width="15" height="15" viewBox="0 0 15 15"><rect x=".8" y=".8" width="13.400" height="13.400" rx="1.800" fill="#f0f4f8" stroke="#2a5a9a" stroke-width="1.400"/><path d="M5.800 3.200h3.400v4h2.600l-4.300 4.600-4.300-4.600h2.600z" fill="#27323e"/></svg>
 <div class="abs nw" style="left:735px;top:4.500px;font-size:10.600px;line-height:14px;color:#000">Right Ctrl</div>
 <svg class="abs" style="left:787px;top:9px" width="12" height="12" viewBox="0 0 12 12"><path d="M11 1L1 11M11 5L5 11M11 9L9 11" stroke="#a8acb0" stroke-width="1"/></svg>
</div>

<!-- watermark -->
<svg class="abs" style="left:314px;top:588px" width="72" height="70" viewBox="0 0 72 70">
 <defs>
  <radialGradient id="gl" cx=".45" cy=".25" r=".85"><stop offset="0" stop-color="#58c0ff"/><stop offset=".35" stop-color="#1a74e6"/><stop offset=".75" stop-color="#0a46c0"/><stop offset="1" stop-color="#062a90"/></radialGradient>
  <linearGradient id="gg" x1="0" y1="0" x2="1" y2="1"><stop offset="0" stop-color="#d8f470"/><stop offset=".35" stop-color="#28c828"/><stop offset="1" stop-color="#0e9a14"/></linearGradient>
  <clipPath id="gc"><circle cx="35.600" cy="35.100" r="31.400"/></clipPath>
 </defs>
 <circle cx="35.600" cy="35.100" r="31.400" fill="url(#gl)"/>
 <g clip-path="url(#gc)">
  <path d="M11.200 14.600 L19.400 7.600 L31.200 5.200 L41.700 6.400 L37 12.200 L26.500 20.400 L19.400 28.700 L11.200 27.500Z" fill="url(#gg)" stroke="url(#gg)" stroke-width="2" stroke-linejoin="round"/>
  <path d="M54.600 11.100 L61.600 18.100 L66.300 27.500 L65.200 39.200 L59.300 40.400 L57 32.200 L58.100 20.400Z" fill="#1fb81f" stroke="#1fb81f" stroke-width="2" stroke-linejoin="round"/>
  <path d="M18.300 47.400 L26.500 55.600 L34.700 53.300 L42.900 58 L40.500 63.800 L28.800 64.400 L20.600 58Z" fill="#17a81a" stroke="#17a81a" stroke-width="2" stroke-linejoin="round"/>
  <path d="M30 8 Q42 6 54 14 Q44 12 34 16 Q26 18 24 14Z" fill="#b8ecff" opacity=".75"/>
 </g>
 <path d="M7.700 35.100 L57.500 16.300 L47.600 58 L31 45.500 L27 55 L21.200 42Z" fill="#fff"/>
 <path d="M21.200 42 L50 21.500 L29.500 44.500Z" fill="#d4deea"/>
 <path d="M21.200 42 L29.500 44.500 L31 45.500 L27 55Z" fill="#a9c0dc"/>
</svg>
<svg class="abs" style="left:380px;top:585px" width="441" height="80" viewBox="0 0 441 80">
 <g transform="scale(1.1,1)" font-family="'DejaVu Sans','Liberation Sans',sans-serif" font-size="47.5" stroke-linejoin="round">
  <text x="14.6 30.7 58.8 72.2 102.1 131.8 149.9 178.3 223.1 266.1 290.7 306.4 335.6 364.3" y="51.500" fill="#000" stroke="#000" stroke-width="6.400">telegrammy.net</text>
  <text x="14.6 30.7 58.8 72.2 102.1 131.8 149.9 178.3 223.1 266.1 290.7 306.4 335.6 364.3" y="51.500" fill="#fff" stroke="#fff" stroke-width="1.200">telegrammy.net</text>
 </g>
</svg>
<!--/STATUS-->
</body>
</html>
